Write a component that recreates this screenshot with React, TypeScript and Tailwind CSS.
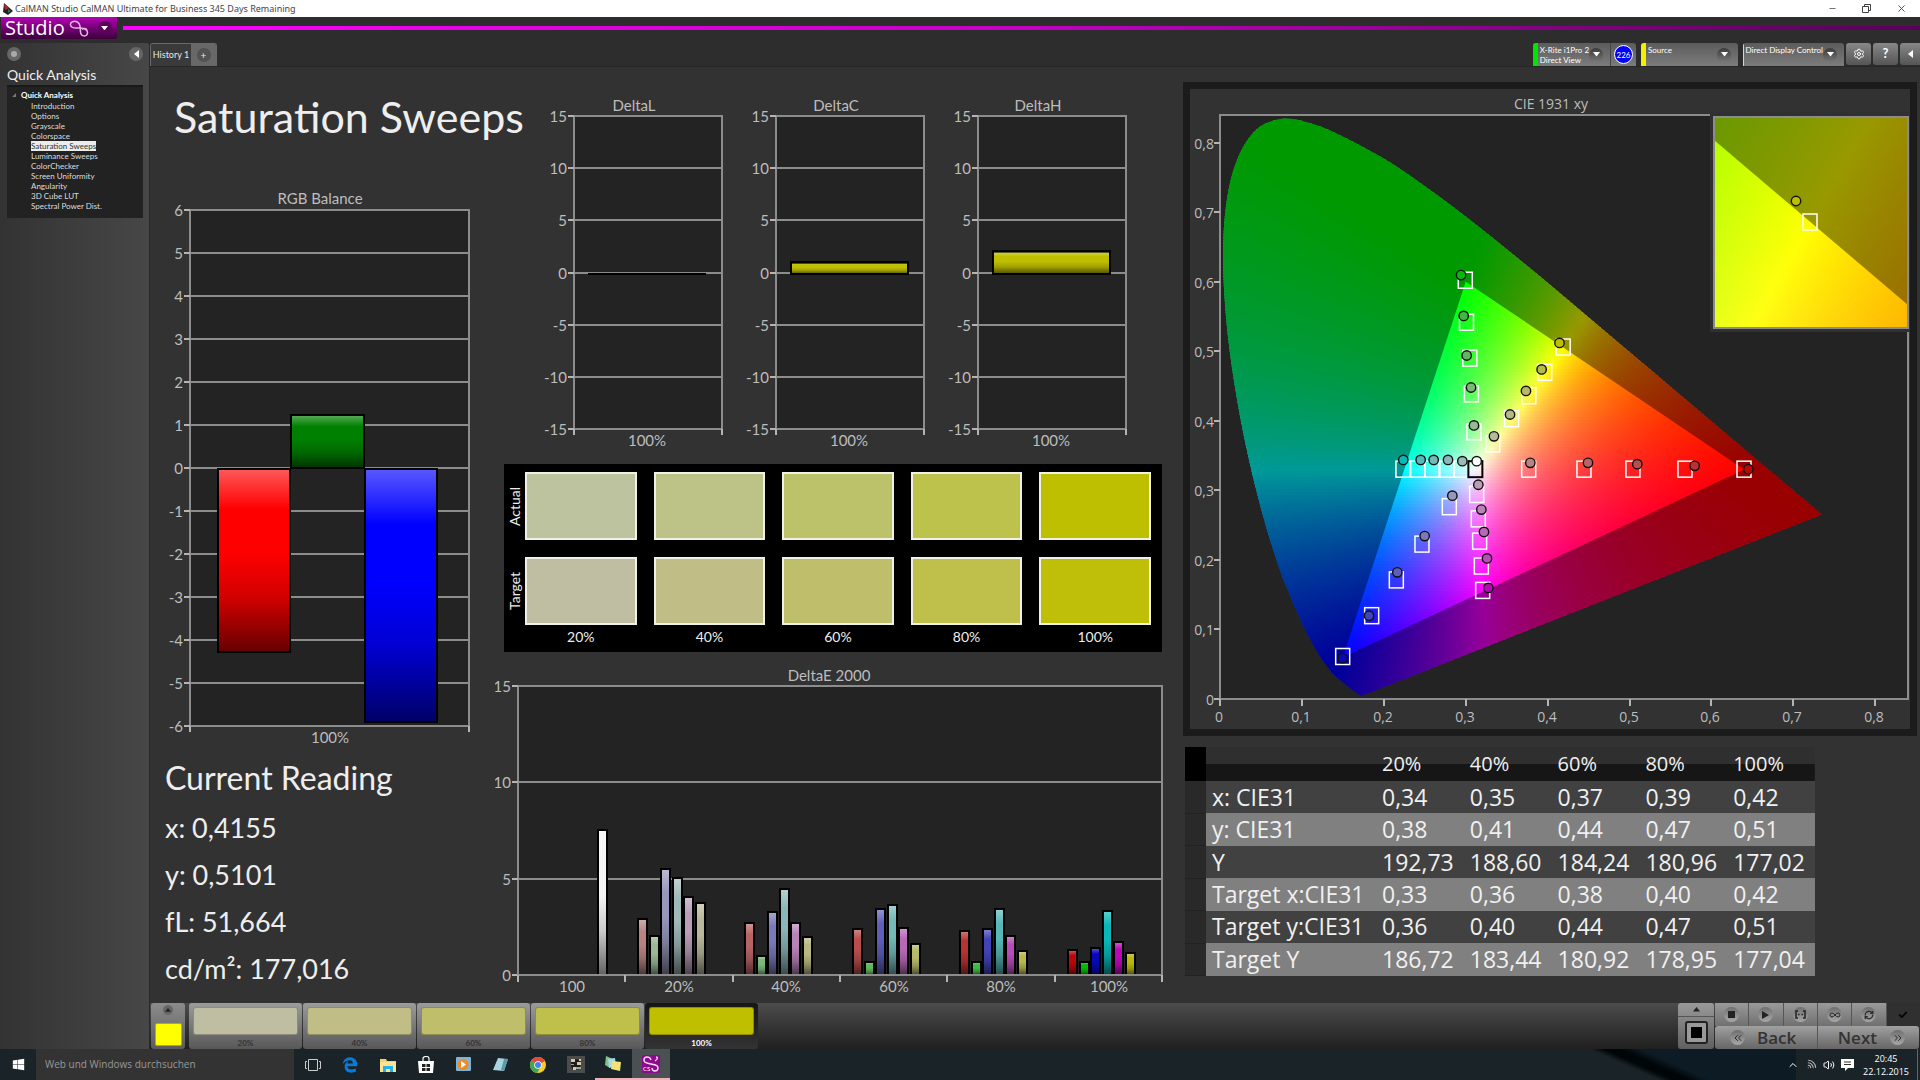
import React from 'react';
import { ChevronsLeft, ChevronsRight, ChevronUp, Check, Infinity as InfinityIcon, Minus, RefreshCw, Settings, Volume2, Wifi, X } from 'lucide-react';
import { FaEdgeLegacy, FaWindows } from 'react-icons/fa';

type Point = [number, number];

const navItems = [
  'Introduction',
  'Options',
  'Grayscale',
  'Colorspace',
  'Saturation Sweeps',
  'Luminance Sweeps',
  'ColorChecker',
  'Screen Uniformity',
  'Angularity',
  '3D Cube LUT',
  'Spectral Power Dist.',
];

const levels = ['20%', '40%', '60%', '80%', '100%'];
const actualColors = ['#bec39f', '#bdc386', '#bcc26a', '#bcc24b', '#bebf00'];
const targetColors = ['#bfbea3', '#c0be86', '#bfbe6a', '#bfbf4b', '#bfbf0a'];

const readings = ['x: 0,4155', 'y: 0,5101', 'fL: 51,664', 'cd/m²: 177,016'];

const tableRows = [
  ['x: CIE31', '0,34', '0,35', '0,37', '0,39', '0,42'],
  ['y: CIE31', '0,38', '0,41', '0,44', '0,47', '0,51'],
  ['Y', '192,73', '188,60', '184,24', '180,96', '177,02'],
  ['Target x:CIE31', '0,33', '0,36', '0,38', '0,40', '0,42'],
  ['Target y:CIE31', '0,36', '0,40', '0,44', '0,47', '0,51'],
  ['Target Y', '186,72', '183,44', '180,92', '178,95', '177,04'],
];

// DeltaE values per saturation level, in R G B C M Y order
const deltaE = [
  { label: '20%', values: [2.9, 2.03, 5.5, 5.05, 4.05, 3.72], colors: ['#b98383', '#97b996', '#9797bb', '#9fb8b8', '#b99db9', '#b9b89b'] },
  { label: '40%', values: [2.68, 0.97, 3.25, 4.48, 2.68, 1.95], colors: ['#b96464', '#7bb87a', '#7a7ab9', '#8ab8b8', '#b983b8', '#b8b882'] },
  { label: '60%', values: [2.37, 0.66, 3.4, 3.64, 2.45, 1.62], colors: ['#b94c4c', '#5fb85e', '#5f5fb9', '#74b8b8', '#b968b8', '#b8b86a'] },
  { label: '80%', values: [2.26, 0.66, 2.37, 3.4, 2.02, 1.22], colors: ['#ba3232', '#41b841', '#4343b9', '#56b9b8', '#b94ab9', '#b8b84b'] },
  { label: '100%', values: [1.3, 0.66, 1.38, 3.33, 1.7, 1.15], colors: ['#ba0808', '#08b808', '#0808ba', '#08b8b8', '#b908b9', '#b8b808'] },
];

const locus: Point[] = [
  [0.1741, 0.005], [0.1714, 0.0051], [0.1644, 0.0109], [0.1566, 0.0177], [0.144, 0.0297], [0.1355, 0.0399],
  [0.1241, 0.0578], [0.1096, 0.0868], [0.0913, 0.1327], [0.0687, 0.2007], [0.0454, 0.295], [0.0235, 0.4127],
  [0.0082, 0.5384], [0.0039, 0.6548], [0.0139, 0.7502], [0.0389, 0.812], [0.0743, 0.8338], [0.1142, 0.8262],
  [0.1547, 0.8059], [0.1929, 0.7816], [0.2296, 0.7543], [0.3016, 0.6923], [0.3731, 0.6245], [0.4441, 0.5547],
  [0.5125, 0.4866], [0.5752, 0.4242], [0.627, 0.3725], [0.6658, 0.334], [0.6915, 0.3083], [0.719, 0.2809], [0.7347, 0.2653],
];

const gamut: Point[] = [[0.64, 0.33], [0.3, 0.6], [0.15, 0.06]];

const targets: Point[] = [
  [0.2995, 0.602], [0.301, 0.5416], [0.305, 0.49], [0.307, 0.4387], [0.31, 0.384],
  [0.419, 0.506], [0.3964, 0.4696], [0.377, 0.436], [0.356, 0.403], [0.333, 0.3667],
  [0.2234, 0.3304], [0.2414, 0.3304], [0.2589, 0.3304], [0.277, 0.3304], [0.2947, 0.3304],
  [0.3769, 0.3304], [0.4444, 0.3304], [0.5042, 0.3304], [0.5677, 0.3304], [0.6398, 0.3304],
  [0.28, 0.2765], [0.2466, 0.2227], [0.2153, 0.1712], [0.1852, 0.1198], [0.1498, 0.0611],
  [0.3134, 0.2941], [0.3154, 0.259], [0.317, 0.2269], [0.3191, 0.1912], [0.3207, 0.1561],
];

const measured: [number, number, string][] = [
  [0.2943, 0.6094, '#08b808'], [0.2975, 0.5507, '#41b841'], [0.3012, 0.4938, '#5fb85e'], [0.3065, 0.4478, '#7bb87a'], [0.3101, 0.3933, '#97b996'],
  [0.4145, 0.5119, '#bebf00'], [0.3927, 0.4738, '#b8b84b'], [0.3736, 0.4429, '#b8b86a'], [0.3541, 0.409, '#b8b882'], [0.3345, 0.3776, '#b9b89b'],
  [0.2238, 0.3437, '#08b8b8'], [0.245, 0.3437, '#56b9b8'], [0.2609, 0.3437, '#74b8b8'], [0.2784, 0.3437, '#8ab8b8'], [0.2959, 0.3419, '#9fb8b8'],
  [0.3134, 0.3419, '#ffffff'],
  [0.3789, 0.3395, '#b98383'], [0.4493, 0.3395, '#b96464'], [0.5095, 0.3376, '#b94c4c'], [0.5795, 0.3352, '#ba3232'], [0.6451, 0.3304, '#ba0808'],
  [0.2837, 0.2923, '#9797bb'], [0.2499, 0.2342, '#7a7ab9'], [0.2165, 0.1821, '#5f5fb9'], [0.1819, 0.1198, '#4343b9'], [0.1498, 0.0587, '#0808ba'],
  [0.3154, 0.308, '#b99db9'], [0.3191, 0.2723, '#b983b8'], [0.3223, 0.2402, '#b968b8'], [0.326, 0.2021, '#b94ab9'], [0.3276, 0.1597, '#b908b9'],
];

// Brightest displayable colour for a chromaticity
const xyColor = (x: number, y: number) => {
  const X = x / y;
  const Z = (1 - x - y) / y;
  const rgb = [
    3.2406 * X - 1.5372 - 0.4986 * Z,
    -0.9689 * X + 1.8758 + 0.0415 * Z,
    0.0557 * X - 0.204 + 1.057 * Z,
  ].map((v) => Math.max(0, v));
  const max = Math.max(...rgb);
  const [r, g, b] = rgb.map((v) => Math.round((255 * v) / max));
  return `rgb(${r},${g},${b})`;
};

const smoothPath = (pts: Point[]) => {
  let d = `M${pts[0][0]} ${pts[0][1]}`;
  for (let i = 0; i < pts.length - 1; i++) {
    const p0 = pts[Math.max(0, i - 1)];
    const p1 = pts[i];
    const p2 = pts[i + 1];
    const p3 = pts[Math.min(pts.length - 1, i + 2)];
    d += `C${p1[0] + (p2[0] - p0[0]) / 6} ${p1[1] + (p2[1] - p0[1]) / 6} ${p2[0] - (p3[0] - p1[0]) / 6} ${p2[1] - (p3[1] - p1[1]) / 6} ${p2[0]} ${p2[1]}`;
  }
  return d + 'Z';
};

const Gloss = ({ id }: { id: string }) => (
  <linearGradient id={id} x1="0" y1="0" x2="0" y2="1">
    <stop offset="0" stopColor="#fff" stopOpacity="0.35" />
    <stop offset="0.22" stopColor="#fff" stopOpacity="0" />
    <stop offset="0.45" stopColor="#000" stopOpacity="0" />
    <stop offset="0.7" stopColor="#000" stopOpacity="0.18" />
    <stop offset="1" stopColor="#000" stopOpacity="0.6" />
  </linearGradient>
);

interface BarProps {
  x: number;
  y: number;
  width: number;
  height: number;
  color: string;
  gloss: string;
}

const Bar = ({ x, y, width, height, color, gloss }: BarProps) => (
  <g stroke="#000" strokeWidth="2">
    <rect x={x} y={y} width={width} height={height} fill={color} />
    <rect x={x} y={y} width={width} height={height} fill={`url(#${gloss})`} />
  </g>
);

interface AxesProps {
  left: number;
  right: number;
  top: number;
  bottom: number;
  ticks: number[];
}

// Plot area with horizontal grid lines; ticks run from top to bottom
const Axes = ({ left, right, top, bottom, ticks }: AxesProps) => (
  <g>
    <rect x={left} y={top} width={right - left} height={bottom - top} fill="#232323" stroke="#8c8c8c" strokeWidth="2" />
    {ticks.map((t, i) => {
      const y = Math.round(top + ((bottom - top) * i) / (ticks.length - 1));
      return (
        <g key={t}>
          <line x1={left - 6} x2={left} y1={y} y2={y} stroke="#b4b4b4" strokeWidth="2" />
          <line x1={left} x2={right} y1={y} y2={y} stroke="#8c8c8c" strokeWidth="2" />
          <text x={left - 7} y={y + 6} textAnchor="end">{t}</text>
        </g>
      );
    })}
  </g>
);

const chartClass = 'block h-auto w-full fill-[#bdbdbd] font-[Lato,sans-serif] text-[15px]';

const RgbBalance = () => (
  <svg viewBox="0 0 345 565" className={chartClass} role="img" aria-label="RGB Balance">
    <defs><Gloss id="gloss-rgb" /></defs>
    <text x="170" y="19" textAnchor="middle">RGB Balance</text>
    <Axes left={40} right={319} top={25} bottom={541} ticks={[6, 5, 4, 3, 2, 1, 0, -1, -2, -3, -4, -5, -6]} />
    <path d="M40 541v6M319 541v6" stroke="#b4b4b4" strokeWidth="2" />
    <Bar x={68} y={284} width={72} height={183} color="#ff0000" gloss="gloss-rgb" />
    <Bar x={141} y={230} width={73} height={53} color="#008000" gloss="gloss-rgb" />
    <Bar x={215} y={284} width={72} height={253} color="#0000ff" gloss="gloss-rgb" />
    <text x="180" y="558" textAnchor="middle">100%</text>
  </svg>
);

const DeltaChart = ({ title, value }: { title: string; value: number }) => {
  const height = value * 10.5;
  return (
    <svg viewBox="0 0 202 365" className={chartClass} role="img" aria-label={title}>
      <defs><Gloss id={`gloss-${title}`} /></defs>
      <text x="94" y="21" textAnchor="middle">{title}</text>
      <Axes left={34} right={182} top={26} bottom={339} ticks={[15, 10, 5, 0, -5, -10, -15]} />
      <path d="M34 339v6M182 339v6" stroke="#b4b4b4" strokeWidth="2" />
      {value > 0 ? (
        <Bar x={49} y={184 - height} width={117} height={height} color="#bfbf00" gloss={`gloss-${title}`} />
      ) : (
        <line x1="48" x2="166" y1="184" y2="184" stroke="#000" strokeWidth="2" />
      )}
      <text x="107" y="356" textAnchor="middle">100%</text>
    </svg>
  );
};

const DeltaEChart = () => {
  const barTop = (v: number) => Math.round(315 - v * 19.3);
  return (
    <svg viewBox="0 0 675 340" className={chartClass} role="img" aria-label="DeltaE 2000">
      <defs><Gloss id="gloss-de" /></defs>
      <text x="334" y="21" textAnchor="middle">DeltaE 2000</text>
      <Axes left={23} right={667} top={26} bottom={315} ticks={[15, 10, 5, 0]} />
      <Bar x={103} y={barTop(7.5)} width={9} height={315 - barTop(7.5)} color="#f4f4f4" gloss="gloss-de" />
      <text x="77" y="332" textAnchor="middle">100</text>
      {deltaE.map((group, g) => {
        const start = Math.round(130 + g * 107.4);
        return (
          <g key={group.label}>
            {group.values.map((v, i) => (
              <Bar
                key={i}
                x={start + 13 + Math.round(i * 11.5)}
                y={barTop(v)}
                width={9}
                height={315 - barTop(v)}
                color={group.colors[i]}
                gloss="gloss-de"
              />
            ))}
            <text x={start + 54} y="332" textAnchor="middle">{group.label}</text>
          </g>
        );
      })}
      <path d="M22 315H668" stroke="#8c8c8c" strokeWidth="2" />
      <path d="M23 315v7M130 315v7M238 315v7M345 315v7M452 315v7M560 315v7M667 315v7" stroke="#b4b4b4" strokeWidth="2" />
    </svg>
  );
};

interface SpectrumProps {
  id: string;
  box: [number, number, number, number];
  range: [number, number, number, number];
  stops: number;
}

// Fills a box with chromaticity colours, one horizontal gradient per strip
const Spectrum = ({ id, box, range, stops }: SpectrumProps) => {
  const [bx, by, bw, bh] = box;
  const [x0, x1, y0, y1] = range;
  const step = 3;
  const rows = Math.ceil(bh / step);
  return (
    <g>
      {Array.from({ length: rows }, (_, r) => {
        const y = Math.max(0.003, y1 - ((y1 - y0) * (r + 0.5)) / rows);
        return (
          <React.Fragment key={r}>
            <linearGradient id={`${id}-${r}`} x1={bx} x2={bx + bw} y1="0" y2="0" gradientUnits="userSpaceOnUse">
              {Array.from({ length: stops + 1 }, (_, s) => (
                <stop key={s} offset={s / stops} stopColor={xyColor(x0 + ((x1 - x0) * s) / stops, y)} />
              ))}
            </linearGradient>
            <rect x={bx} y={by + r * step} width={bw} height={Math.min(step + 1, bh - r * step)} fill={`url(#${id}-${r})`} />
          </React.Fragment>
        );
      })}
    </g>
  );
};

const px = (x: number) => 30 + x * 819;
const py = (y: number) => 610 - y * 695.6;

const CieChart = () => {
  const shape = smoothPath(locus.map(([x, y]) => [px(x), py(y)]));
  const triangle = gamut.map(([x, y]) => `${px(x)} ${py(y)}`).join('L');
  return (
    <svg viewBox="0 0 720 640" className="block h-auto w-full fill-[#bdbdbd] font-['Open_Sans',sans-serif] text-[14px]" role="img" aria-label="CIE 1931 xy">
      <defs>
        <clipPath id="locus"><path d={shape} /></clipPath>
        <clipPath id="inset"><rect x="524" y="28" width="194" height="210" /></clipPath>
      </defs>
      <text x="361" y="20" textAnchor="middle">CIE 1931 xy</text>
      <rect x="30" y="26" width="688" height="584" fill="#232323" stroke="#8c8c8c" strokeWidth="2" />
      {[0, 1, 2, 3, 4, 5, 6, 7, 8].map((t) => {
        const x = Math.round(px(t / 10));
        const y = Math.round(py(t / 10));
        const label = t === 0 ? '0' : `0,${t}`;
        return (
          <g key={t}>
            <path d={`M${x} 610v7M${24} ${y}h6`} stroke="#b4b4b4" strokeWidth="2" />
            <text x="24" y={y + 6} textAnchor="end">{label}</text>
            <text x={x - 1} y="633" textAnchor="middle">{label}</text>
          </g>
        );
      })}
      <g clipPath="url(#locus)">
        <Spectrum id="cie" box={[30, 28, 603, 582]} range={[0, 0.7363, 0, 0.8367]} stops={60} />
        <path d={`M0 0H720V640H0ZM${triangle}Z`} fillRule="evenodd" fill="#000" fillOpacity="0.4" />
      </g>
      {targets.map(([x, y]) => (
        <rect key={`${x}-${y}`} x={px(x) - 7} y={py(y) - 8} width="14" height="16" fill="none" stroke="#fff" strokeWidth="1.5" />
      ))}
      <rect x={px(0.3118) - 7} y={py(0.3304) - 8} width="14" height="16" fill="none" stroke="#000" strokeWidth="2" />
      {measured.map(([x, y, color]) => (
        <circle key={`${x}-${y}`} cx={px(x)} cy={py(y)} r="4.7" fill={color} stroke="#111" strokeWidth="1.4" />
      ))}

      {/* Magnified view around the selected target */}
      <rect x="520" y="23" width="200" height="220" fill="#303030" />
      <g clipPath="url(#inset)">
        <Spectrum id="zoom" box={[524, 28, 194, 210]} range={[0.3945, 0.4438, 0.4802, 0.5297]} stops={24} />
        <path d="M524 51L718 216V28H524Z" fill="#000" fillOpacity="0.4" />
      </g>
      <rect x="524" y="28" width="194" height="211" fill="none" stroke="#8c8c8c" strokeWidth="2" />
      <rect x="613" y="125" width="14" height="16" fill="none" stroke="#fff" strokeWidth="1.5" />
      <circle cx="606" cy="112" r="4.7" fill="#bebf00" stroke="#111" strokeWidth="1.4" />
    </svg>
  );
};

const DropArrow = () => (
  <span className="flex size-[14px] shrink-0 items-center justify-center rounded-full bg-gradient-to-b from-[#3c3c3c] to-[#777]">
    <svg viewBox="0 0 8 5" className="w-[7px] fill-white"><path d="M0 0h8L4 5Z" /></svg>
  </span>
);

const LeftArrow = () => (
  <svg viewBox="0 0 5 8" className="h-[8px] fill-white"><path d="M5 0v8L0 4Z" /></svg>
);

const Header = () => (
  <header>
    <div className="flex h-[17px] items-center bg-white pl-[3px] text-[#444]">
      <svg viewBox="0 0 10 12" className="h-[12px] w-[10px]">
        <path d="M1 0L10 8L5 12L0 9Z" fill="#222" />
        <path d="M1 1L6 5L2 7Z" fill="#c02030" />
        <path d="M5 6L8 8L5 10Z" fill="#2a7a40" />
      </svg>
      <span className="ml-[2px] flex-1 font-['Noto_Sans',sans-serif] text-[9px] leading-[17px]">
        CalMAN Studio CalMAN Ultimate for Business 345 Days Remaining
      </span>
      <div className="flex items-center gap-[25px] pr-[13px]">
        <button aria-label="Minimize"><Minus className="size-[9px]" strokeWidth={2} /></button>
        <button aria-label="Restore">
          <svg viewBox="0 0 9 9" className="size-[9px] fill-none stroke-[#444]"><path d="M.5 2.5h6v6h-6ZM2.5 2.5v-2h6v6h-2" /></svg>
        </button>
        <button aria-label="Close"><X className="size-[11px]" strokeWidth={2} /></button>
      </div>
    </div>
    <div className="flex h-[26px] items-start pl-[1px]">
      <button className="flex h-[22px] w-[116px] items-center rounded-b-[2px] bg-gradient-to-b from-[#b400b4] to-[#3c003c] pl-[4px] text-white">
        <span className="font-['Open_Sans',sans-serif] text-[20px] leading-[20px]">Studio</span>
        <svg viewBox="0 0 20 17" className="ml-[4px] h-[17px] w-[20px] fill-none stroke-[#e0b8e0] stroke-[1.5]">
          <path d="M9 2.500C5 0 1 2 1.500 5C2 9 7 8 10 8C14 8 19 9 18.500 13C18 17 12 17 11.500 12C11 8 12 3 8 2M13 9.500C15 8 17 8 18 10" />
        </svg>
        <span className="ml-[9px] flex size-[14px] items-center justify-center rounded-full bg-[#5c005c]">
          <svg viewBox="0 0 8 5" className="w-[7px] fill-white"><path d="M0 0h8L4 5Z" /></svg>
        </span>
      </button>
      <div className="mt-[9px] ml-[6px] h-[4px] flex-1 bg-gradient-to-r from-[#ff00ff] via-[#c400c4] to-[#5a005a]" />
    </div>
  </header>
);

const Sidebar = () => (
  <aside className="w-[150px] shrink-0 rounded-tr-[3px] border-r border-[#2a2a2a] bg-gradient-to-r from-[#333] to-[#474747] pr-[6px] pl-[7px]">
    <div className="flex h-[21px] items-center justify-between">
      <button aria-label="Record" className="flex size-[14px] items-center justify-center rounded-full bg-[#666]">
        <span className="size-[6px] rounded-full bg-[#aaa]" />
      </button>
      <button aria-label="Collapse" className="flex size-[14px] items-center justify-center rounded-full bg-[#666]">
        <LeftArrow />
      </button>
    </div>
    <h2 className="pt-px text-[14px] leading-[20px] text-[#eee]">Quick Analysis</h2>
    <nav className="h-[133px] border-t-2 border-[#191919] bg-[#222] pt-[2px] text-[8px] text-[#ddd]">
      <div className="flex h-[12px] items-center gap-[5px] pl-[5px] font-bold text-white">
        <svg viewBox="0 0 4 4" className="size-[4px] fill-[#777]"><path d="M4 0v4H0Z" /></svg>
        Quick Analysis
      </div>
      <ul className="pl-[24px]">
        {navItems.map((item) => (
          <li key={item} className="h-[10px] leading-[10px]">
            <a href="#" className={item === 'Saturation Sweeps' ? 'inline-block h-[10px] bg-[#ececec] text-[#333]' : 'inline-block h-[10px]'}>
              {item}
            </a>
          </li>
        ))}
      </ul>
    </nav>
  </aside>
);

const DeviceTab = ({ lines, stripe, width, children }: { lines: string[]; stripe: string; width: string; children?: React.ReactNode }) => (
  <div className={`flex h-[23px] overflow-hidden rounded-t-[3px] bg-gradient-to-b from-[#5c5c5c] to-[#7c7c7c] ${width}`}>
    <span className={`w-[5px] ${stripe}`} />
    <button className="flex flex-1 items-center justify-between pr-[7px] pl-[2px] text-left text-[8px] leading-[10px] text-white">
      <span className="self-start pt-[2px] whitespace-nowrap">
        {lines.map((l) => <span key={l} className="block">{l}</span>)}
      </span>
      <DropArrow />
    </button>
    {children}
  </div>
);

const squareButton = 'flex h-[22px] w-[25px] items-center justify-center rounded-[3px] bg-gradient-to-b from-[#888] to-[#555] text-white';

const TabBar = () => (
  <div className="flex h-[23px] items-end justify-between">
    <div className="flex h-[23px] overflow-hidden rounded-t-[3px] border border-b-0 border-[#6a6a6a] text-[10px] text-[#e6e6e6]">
      <button className="w-[40px] bg-[#3a3a3a] text-[9px] whitespace-nowrap">History 1</button>
      <button aria-label="Add history" className="flex w-[25px] items-center justify-center bg-[#686868]">
        <span className="flex size-[14px] items-center justify-center rounded-full bg-[#525252] leading-none">+</span>
      </button>
    </div>
    <div className="flex">
      <DeviceTab lines={['X-Rite i1Pro 2', 'Direct View']} stripe="bg-[#00e600]" width="w-[103px]">
        <span className="flex w-[27px] items-center justify-center border-l border-[#444]">
          <span className="flex size-[19px] items-center justify-center rounded-full border border-white bg-[#0000ff] text-[8px] text-white">226</span>
        </span>
      </DeviceTab>
      <div className="w-[5px]" />
      <DeviceTab lines={['Source']} stripe="bg-[#f0f000]" width="w-[97px]" />
      <div className="w-[5px]" />
      <DeviceTab lines={['Direct Display Control']} stripe="bg-[#f0f000]" width="w-[101px]" />
      <div className="ml-[2px] flex gap-[2px]">
        <button aria-label="Settings" className={squareButton}><Settings className="size-[12px]" /></button>
        <button aria-label="Help" className={squareButton}><span className="text-[13px] font-bold">?</span></button>
        <button aria-label="Collapse panel" className="flex h-[22px] w-[20px] items-center justify-center rounded-l-[3px] bg-gradient-to-b from-[#888] to-[#555]">
          <LeftArrow />
        </button>
      </div>
    </div>
  </div>
);

const SwatchRow = ({ label, colors }: { label: string; colors: string[] }) => (
  <div className="flex h-[68px]">
    <span className="flex w-[21px] rotate-180 items-center justify-center text-[14px] leading-[18px] [writing-mode:vertical-rl]">{label}</span>
    <div className="grid flex-1 grid-cols-5 gap-x-[17px]">
      {colors.map((c) => (
        <div key={c} className="border-2 border-[#f0f0e4]" style={{ backgroundColor: c }} />
      ))}
    </div>
  </div>
);

const Swatches = () => (
  <section className="mr-[8px] ml-[9px] h-[188px] bg-black pt-[8px] pr-[11px] text-[#eee]">
    <SwatchRow label="Actual" colors={actualColors} />
    <div className="h-[17px]" />
    <SwatchRow label="Target" colors={targetColors} />
    <div className="grid grid-cols-5 gap-x-[17px] pl-[21px]">
      {levels.map((l) => <span key={l} className="pt-[2px] text-center text-[14px] leading-[20px]">{l}</span>)}
    </div>
  </section>
);

const ReadingsTable = () => (
  <table className="mt-[11px] ml-[15px] h-[229px] w-[84%] table-fixed border-collapse font-['Open_Sans',sans-serif] text-[#f0f0f0]">
    <colgroup>
      <col className="w-[21px]" />
      <col className="w-[170px]" />
      <col /><col /><col /><col /><col />
    </colgroup>
    <thead>
      <tr className="h-[34px] bg-[linear-gradient(#2f2f2f_50%,#161616_50%)] text-left text-[20px] leading-[20px]">
        <td className="bg-black" />
        <td />
        {levels.map((l) => <th key={l} scope="col" className="pl-[6px] font-normal">{l}</th>)}
      </tr>
    </thead>
    <tbody>
      {tableRows.map((row, r) => (
        <tr key={row[0]} className={`text-[23px] leading-[30px] whitespace-nowrap ${r % 2 ? 'bg-[#808080]' : 'bg-[#414141]'}`}>
          <td className="border-b border-[#222] bg-[#292929]" />
          {row.map((cell, c) =>
            c === 0 ? (
              <th key={c} scope="row" className="pb-px pl-[6px] text-left font-normal">{cell}</th>
            ) : (
              <td key={c} className="pb-px pl-[6px]">{cell}</td>
            )
          )}
        </tr>
      ))}
    </tbody>
  </table>
);

const roundIcon = 'flex size-[15px] items-center justify-center rounded-full bg-gradient-to-b from-[#6e6e6e] to-[#a8a8a8] text-[#2a2a2a]';
const transport = 'flex h-[23px] flex-1 items-center justify-center border-r border-[#555] bg-gradient-to-b from-[#9a9a9a] to-[#707070]';

const Toolbar = () => (
  <footer className="flex h-[46px] items-stretch bg-gradient-to-b from-[#4c4c4c] to-[#202020] pl-[1px]">
    <button aria-label="Current patch" className="mr-[4px] flex w-[34px] flex-col items-center justify-between rounded-[3px] bg-gradient-to-b from-[#8c8c8c] to-[#5c5c5c] pt-[2px] pb-[3px]">
      <span className="flex size-[10px] items-center justify-center rounded-full bg-[#666]">
        <svg viewBox="0 0 8 5" className="w-[6px] fill-[#222]"><path d="M0 5h8L4 0Z" /></svg>
      </span>
      <span className="h-[23px] w-[27px] rounded-[2px] border border-[#b0b000] bg-[#ffff00]" />
    </button>
    <div className="flex gap-[1px]">
      {levels.map((l, i) => (
        <button
          key={l}
          className={`flex w-[113px] flex-col items-center rounded-[3px] px-[4px] pt-[4px] text-[8px] font-bold ${
            i === 4 ? 'bg-gradient-to-b from-[#161616] to-[#333] text-white' : 'bg-gradient-to-b from-[#9c9c9c] to-[#585858] text-[#333]'
          }`}
        >
          <span className="h-[28px] w-full rounded-[3px] border border-black/25" style={{ backgroundColor: i === 4 ? '#bfbf00' : targetColors[i] }} />
          <span className="pt-[2px] leading-[12px]">{l}</span>
        </button>
      ))}
    </div>
    <div className="ml-auto flex w-[242px] gap-[1px]">
      <button aria-label="Pattern window" className="flex w-[36px] flex-col items-center rounded-[3px] bg-gradient-to-b from-[#9a9a9a] to-[#606060]">
        <span className="flex h-[14px] w-full items-center justify-center border-b border-[#555]">
          <svg viewBox="0 0 8 5" className="w-[7px] fill-[#222]"><path d="M0 5h8L4 0Z" /></svg>
        </span>
        <span className="mt-[4px] flex size-[23px] items-center justify-center rounded-[3px] border-2 border-[#222] bg-[#999]">
          <span className="size-[11px] bg-black" />
        </span>
      </button>
      <div className="flex flex-1 flex-col">
        <div className="flex">
          <button aria-label="Stop" className={transport}><span className={roundIcon}><span className="size-[7px] bg-[#222]" /></span></button>
          <button aria-label="Play" className={transport}>
            <span className={roundIcon}><svg viewBox="0 0 7 8" className="h-[8px] fill-[#222]"><path d="M0 0v8L7 4Z" /></svg></span>
          </button>
          <button aria-label="Read series" className={transport}>
            <span className={roundIcon}>
              <svg viewBox="0 0 11 9" className="h-[9px] fill-none stroke-[#222] stroke-[1.5]"><path d="M3 1H1v7h2M8 1h2v7H8M3 4.500h1.500M6.500 4.500H8" /></svg>
            </span>
          </button>
          <button aria-label="Read continuous" className={transport}><span className={roundIcon}><InfinityIcon className="size-[12px]" /></span></button>
          <button aria-label="Refresh" className={transport}><span className={roundIcon}><RefreshCw className="size-[10px]" strokeWidth={3} /></span></button>
          <button aria-label="Accept" className="flex h-[23px] flex-1 items-center justify-center bg-[#303030] text-black"><Check className="size-[10px]" strokeWidth={4} /></button>
        </div>
        <div className="flex h-[23px] pr-px font-['Open_Sans',sans-serif] text-[17px] font-semibold text-[#333]">
          <button className="flex flex-1 items-center gap-[12px] rounded-l-[3px] border-r border-[#555] bg-gradient-to-b from-[#a0a0a0] to-[#666] pl-[15px] leading-none">
            <span className={roundIcon}><ChevronsLeft className="size-[12px]" /></span>Back
          </button>
          <button className="flex flex-1 items-center justify-end gap-[13px] rounded-r-[3px] bg-gradient-to-b from-[#a0a0a0] to-[#666] pr-[14px] leading-none">
            Next<span className={roundIcon}><ChevronsRight className="size-[12px]" /></span>
          </button>
        </div>
      </div>
    </div>
  </footer>
);

const taskButton = 'flex flex-1 items-center justify-center';

const Taskbar = () => (
  <div className="flex h-[31px] items-stretch bg-[#1a2327] bg-[linear-gradient(24deg,transparent_44%,#000508_48%,#000508_52%,#0d1c24_58%)] bg-[length:300px_31px] bg-[position:right_124px_top] bg-no-repeat text-white">
    <button aria-label="Start" className="flex w-[36px] items-center justify-center"><FaWindows className="size-[13px]" /></button>
    <input
      aria-label="Web und Windows durchsuchen"
      placeholder="Web und Windows durchsuchen"
      className="w-[258px] bg-[#333] pl-[9px] font-['Open_Sans',sans-serif] text-[10px] placeholder-[#999] outline-none"
    />
    <div className="flex w-[376px]">
      <button aria-label="Task view" className={taskButton}>
        <svg viewBox="0 0 16 12" className="h-[12px] w-[16px] fill-none stroke-[#ccc]"><path d="M3.500 .5h9v11h-9ZM2 2.500H.5v7H2M14 2.500h1.500v7H14" /></svg>
      </button>
      <button aria-label="Edge" className={taskButton}><FaEdgeLegacy className="size-[16px] text-[#0a7ad8]" /></button>
      <button aria-label="Explorer" className={taskButton}>
        <svg viewBox="0 0 16 14" className="h-[14px] w-[16px]"><path d="M0 1h6l1 2h9v11H0Z" fill="#f5d36b" /><path d="M0 4h16v10H0Z" fill="#fbe394" /><path d="M3 14V8h10v6h-3v-3H6v3Z" fill="#28b0e8" /></svg>
      </button>
      <button aria-label="Store" className={taskButton}>
        <svg viewBox="0 0 16 17" className="h-[17px] w-[16px]"><path d="M5 5V2.500a3 2 0 0 1 6 0V5" fill="none" stroke="#fff" strokeWidth="1.200" /><path d="M0 5h16l-1 12H1Z" fill="#fff" /><path d="M4 8h3.500v3H4ZM8.500 8H12v3H8.500ZM4 12h3.500v3H4ZM8.500 12H12v3H8.500Z" fill="#222" /></svg>
      </button>
      <button aria-label="Media Player" className={taskButton}>
        <svg viewBox="0 0 15 15" className="size-[15px]"><rect width="15" height="14" rx="1" fill="#7fb4d4" /><circle cx="7" cy="7.500" r="5.500" fill="#f08a24" /><path d="M5 4v7l5-3.500Z" fill="#fff" /></svg>
      </button>
      <button aria-label="Notepad" className={taskButton}>
        <svg viewBox="0 0 16 15" className="h-[15px] w-[16px]"><path d="M5 1l10 1-4 12L0 13Z" fill="#a8d4e0" /><path d="M11 2l4 0-4 12-3-1Z" fill="#5b98aa" /></svg>
      </button>
      <button aria-label="Chrome" className={taskButton}>
        <svg viewBox="0 0 16 16" className="size-[16px]">
          <circle cx="8" cy="8" r="8" fill="#f7cd2e" />
          <path d="M8 8L1.070 4A8 8 0 0 1 14.930 4Z" fill="#dd4b3e" />
          <path d="M8 8L1.070 4A8 8 0 0 0 7 15.930L11 9.500Z" fill="#3fa557" />
          <circle cx="8" cy="8" r="3.800" fill="#fff" />
          <circle cx="8" cy="8" r="3" fill="#3f83ee" />
        </svg>
      </button>
      <button aria-label="Video tool" className={taskButton}>
        <svg viewBox="0 0 18 17" className="h-[17px] w-[18px]"><rect width="18" height="17" fill="#4c4c4c" /><path d="M4 5l4-2 5 1 1 4-2 5-6 1-2-4Z" fill="#1c1c1c" /><path d="M4 3h4v3H4ZM10 6h4v3h-4ZM6 11h3v3H6ZM12 3h2v2h-2Z" fill="#d8c8a8" /><path d="M9 11h5v2H9ZM4 8h3v1H4Z" fill="#8fae94" /></svg>
      </button>
      <button aria-label="Sticky notes" className={`${taskButton} border-b-2 border-[#f2b0b8]`}>
        <svg viewBox="0 0 17 15" className="h-[15px] w-[17px]"><path d="M1 0l7 3-3 9-5-3Z" fill="#7fc48a" /><path d="M3 3l7-1 1 8-7 2Z" fill="#a8d8e8" /><path d="M7 5l9 1-1 9-9-2Z" fill="#f3e27a" /></svg>
      </button>
      <button aria-label="CalMAN" className={`${taskButton} border-b-2 border-[#f2b0b8] bg-[#4b5053]`}>
        <svg viewBox="0 0 18 18" className="size-[18px]">
          <rect width="18" height="18" rx="2" fill="#8e0a8c" />
          <path d="M9 5C8 1 2 1 2 5s5 3 7 4 7 0 7 4-6 4-6 0M13 6c3-2 3-4 1-4" fill="none" stroke="#f3dcf3" strokeWidth="1.400" />
          <text x="1" y="16" fill="#fff" fontSize="6" fontFamily="Lato">CS</text>
        </svg>
      </button>
    </div>
    <div className="mr-[2px] ml-auto flex items-center gap-[6px] border-r border-[#666] pr-[8px]">
      <ChevronUp className="size-[12px]" />
      <Wifi className="size-[12px] rotate-45 text-[#bbb]" />
      <Volume2 className="size-[12px]" />
      <svg viewBox="0 0 13 12" className="h-[12px] w-[13px]"><path d="M0 0h13v9H7L4 12V9H0Z" fill="#fff" /><path d="M3 3h7M3 5.500h7" stroke="#333" /></svg>
      <div className="ml-[3px] text-center font-['Open_Sans',sans-serif] text-[9px] leading-[13px]">
        <div>20:45</div>
        <div>22.12.2015</div>
      </div>
    </div>
  </div>
);

export default function App() {
  return (
    <div className="flex min-h-screen flex-col overflow-hidden bg-[#2d2d2d] font-[Lato,sans-serif]">
      <Header />
      <div className="flex flex-1">
        <Sidebar />
        <div className="flex min-w-0 flex-1 flex-col">
          <TabBar />
          <main className="grid flex-1 grid-cols-[345fr_675fr_750fr] border-t border-[#262626] bg-[#323232]">
            <section className="min-w-0 text-[#eee]">
              <h1 className="h-[118px] pt-[23px] pl-[24px] text-[43px] leading-[54px] whitespace-nowrap">Saturation Sweeps</h1>
              <RgbBalance />
              <h2 className="pt-[7px] pl-[15px] text-[32px] leading-[41px]">Current Reading</h2>
              <ul className="pt-[6px] pl-[15px] text-[27px] leading-[47px]">
                {readings.map((r) => <li key={r}>{r}</li>)}
              </ul>
            </section>
            <section className="min-w-0 pt-[23px]">
              <div className="grid grid-cols-3 pr-[24px] pb-[9px] pl-[45px]">
                <DeltaChart title="DeltaL" value={0} />
                <DeltaChart title="DeltaC" value={1.1} />
                <DeltaChart title="DeltaH" value={2.15} />
              </div>
              <Swatches />
              <div className="mt-[8px]"><DeltaEChart /></div>
            </section>
            <section className="min-w-0 pt-[15px]">
              <div className="mr-[3px] ml-[13px] border-[7px] border-[#1b1b1b]"><CieChart /></div>
              <ReadingsTable />
            </section>
          </main>
          <Toolbar />
        </div>
      </div>
      <Taskbar />
    </div>
  );
}
